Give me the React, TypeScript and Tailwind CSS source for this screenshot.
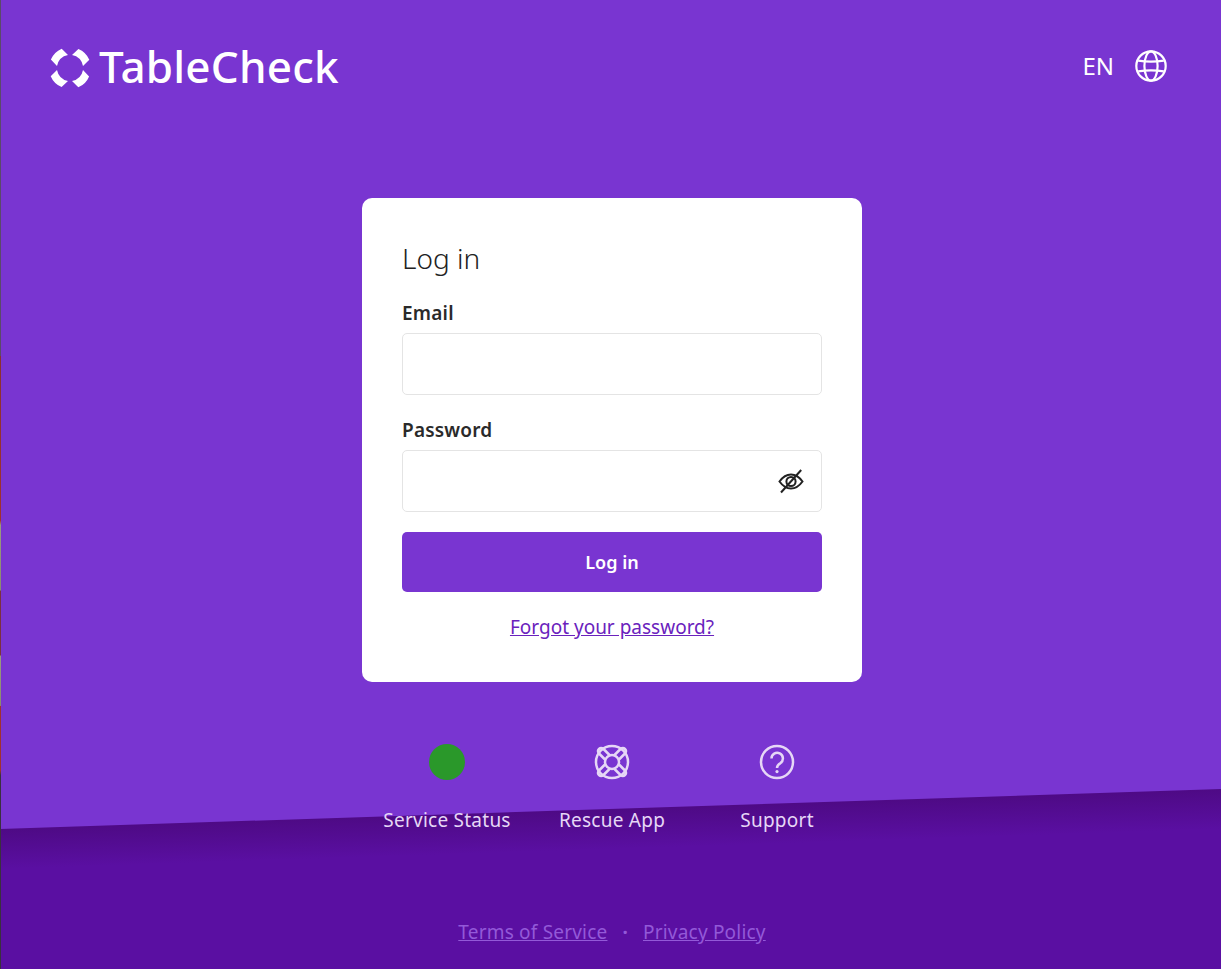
const bodyFont = "font-['Noto_Sans',sans-serif]"

function LogoMark() {
  const piece = 'M15.7 4.7 L22 11 A14 14 0 0 0 11 22 L4.9 15.6 Q8 8 15.7 4.7 Z'
  return (
    <svg width="48" height="48" viewBox="0 0 48 48" fill="#fff">
      <path d={piece} />
      <path d={piece} transform="rotate(90 24 24)" />
      <path d={piece} transform="rotate(180 24 24)" />
      <path d={piece} transform="rotate(270 24 24)" />
    </svg>
  )
}

function GlobeIcon() {
  return (
    <svg width="32" height="32" viewBox="0 0 32 32" fill="none" stroke="#fff" strokeWidth="2.2">
      <circle cx="16" cy="16" r="14.7" />
      <ellipse cx="16" cy="16" rx="6.6" ry="14.7" />
      <path d="M3.2 10.6 Q16 12.6 28.8 10.6 M3.2 21.4 Q16 19.4 28.8 21.4" />
    </svg>
  )
}

function EyeOff() {
  return (
    <svg width="32" height="32" viewBox="0 0 32 32" fill="none" stroke="#222" strokeWidth="2">
      <path d="M4.5 15.5 Q9.5 8.5 16 8.5 Q22.5 8.5 27.5 15.5 Q22.5 22.5 16 22.5 Q9.5 22.5 4.5 15.5 Z" />
      <circle cx="16" cy="15.5" r="4.6" />
      <path d="M6 26.5 L26.2 4" />
    </svg>
  )
}

function LifeRing() {
  const band = 'M16 11.5 L9.5 5 Q7 3 5 5 Q3 7 5 9.5 L11.5 16'
  return (
    <svg width="36" height="36" viewBox="0 0 36 36" fill="none" stroke="#e6d7f6" strokeWidth="2.5" strokeLinejoin="round">
      <circle cx="18" cy="18" r="16" />
      <circle cx="18" cy="18" r="7" />
      <path d={band} />
      <path d={band} transform="rotate(90 18 18)" />
      <path d={band} transform="rotate(180 18 18)" />
      <path d={band} transform="rotate(270 18 18)" />
    </svg>
  )
}

function Help() {
  return (
    <svg width="36" height="36" viewBox="0 0 36 36" fill="none" stroke="#e6d7f6" strokeWidth="2.5">
      <circle cx="18" cy="18" r="16" />
      <path d="M12.5 14.5 a5.7 5.7 0 1 1 9 4.6 Q18 21 18 24" />
      <circle cx="18" cy="27.6" r="1.6" fill="#e6d7f6" stroke="none" />
    </svg>
  )
}

export default function App() {
  return (
    <div className={`relative h-[969px] w-[1221px] overflow-hidden bg-[#7935d1] ${bodyFont}`}>
      <div className="absolute left-[-50px] top-[809px] h-[300px] w-[1321px] origin-top -rotate-[1.876deg] bg-[linear-gradient(180deg,#4e0a85_0px,#5a0fa2_40px)]" />
      <div className="absolute left-0 top-0 h-full w-px bg-[linear-gradient(180deg,#5a4a6a_0%,#5a4a6a_36.7%,#8a3030_36.7%,#a03030_53.7%,#9a9a80_54.2%,#8a8a70_60.9%,#7a3040_61%,#7a3040_67.6%,#9a9a80_67.7%,#8a8a70_72.8%,#a03030_72.9%,#a03030_79.5%,#3a3040_80%,#3a3040_100%)]" />

      <div className="relative flex h-full flex-col">
        <header className="flex items-center justify-between pl-[46px] pr-[54px] pt-[44px]">
          <div className="flex items-center gap-[5px]">
            <LogoMark />
            <span className="mb-1 text-[44px] font-medium leading-[44px] tracking-[0.2px] text-white">TableCheck</span>
          </div>
          <div className="mb-1 flex items-center gap-[21px] text-white">
            <span className="text-[24px] leading-8">EN</span>
            <GlobeIcon />
          </div>
        </header>

        <main className="ml-[362px] mt-[106px] w-[500px] rounded-[10px] bg-white px-10 pb-[42px] pt-10">
          <h1 className="text-[28px] font-light leading-10 text-[#222222]">Log in</h1>
          <label className="mt-[23px] block text-[19px] font-semibold leading-6 tracking-[0.2px] text-[#2a2a2a]">Email</label>
          <input className="mt-2 block h-[62px] w-full rounded-[5px] border border-[#e4e4e4] bg-white" />
          <label className="mt-[23px] block text-[19px] font-semibold leading-6 tracking-[0.2px] text-[#2a2a2a]">Password</label>
          <div className="relative mt-2">
            <input className="block h-[62px] w-full rounded-[5px] border border-[#e4e4e4] bg-white" />
            <div className="absolute right-[15px] top-[16px]">
              <EyeOff />
            </div>
          </div>
          <button className="mt-5 block h-[60px] w-full rounded-[5px] bg-[#7935d1] text-[18px] font-semibold text-white">Log in</button>
          <div className="mt-[23px] text-center">
            <a className="text-[19px] leading-6 text-[#6a22bd] underline">Forgot your password?</a>
          </div>
        </main>

        <nav className="ml-[362px] mt-[62px] flex w-[500px] justify-center">
          <div className="flex w-[165px] flex-col items-center gap-[28px]">
            <div className="size-[36px] rounded-full bg-[#2a982a]" />
            <span className="whitespace-nowrap text-[19px] leading-6 tracking-[0.25px] text-[#e6d7f6]">Service Status</span>
          </div>
          <div className="flex w-[165px] flex-col items-center gap-[28px]">
            <LifeRing />
            <span className="whitespace-nowrap text-[19px] leading-6 tracking-[0.25px] text-[#e6d7f6]">Rescue App</span>
          </div>
          <div className="flex w-[165px] flex-col items-center gap-[28px]">
            <Help />
            <span className="whitespace-nowrap text-[19px] leading-6 tracking-[0.25px] text-[#e6d7f6]">Support</span>
          </div>
        </nav>

        <footer className="ml-[362px] mt-[88px] flex w-[500px] items-center justify-center gap-[15px] text-[19px] leading-6 tracking-[0.2px] text-[#9359d8]">
          <a className="underline">Terms of Service</a>
          <span className="font-bold">·</span>
          <a className="underline">Privacy Policy</a>
        </footer>
      </div>
    </div>
  )
}
